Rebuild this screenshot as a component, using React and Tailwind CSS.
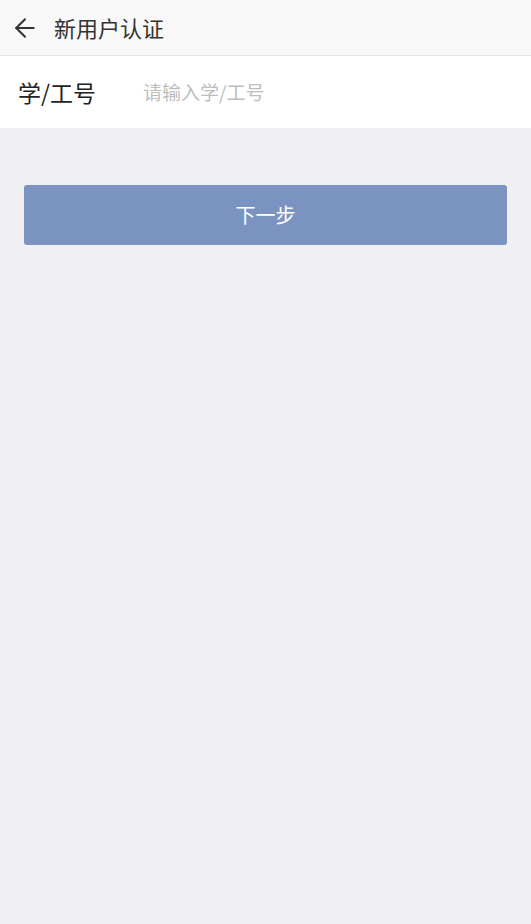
import { ArrowLeft } from "lucide-react";

const FONT = { fontFamily: '"Noto Sans CJK SC", "Noto Sans", sans-serif' };

export default function App() {
  return (
    <div className="min-h-[924px] w-full bg-[#f0f0f3]" style={FONT}>
      <header className="flex h-[56px] items-center border-b border-[#e3e3e3] bg-[#f8f8f8] pl-[10px]">
        <ArrowLeft size={30} strokeWidth={1.6} className="text-[#333]" />
        <h1 className="ml-[14px] text-[22px] text-[#333]">新用户认证</h1>
      </header>

      <div className="flex h-[72px] items-center bg-white pl-[18px]">
        <label className="w-[125px] text-[23px] text-[#222]">学/工号</label>
        <input
          type="text"
          placeholder="请输入学/工号"
          className="flex-1 bg-transparent text-[19px] text-[#222] outline-none placeholder:text-[#bdbdbd]"
        />
      </div>

      <div className="px-[24px] pt-[57px]">
        <button className="flex h-[60px] w-full items-center justify-center rounded-[3px] bg-[#7b93c1] text-[20px] text-white">
          下一步
        </button>
      </div>
    </div>
  );
}
